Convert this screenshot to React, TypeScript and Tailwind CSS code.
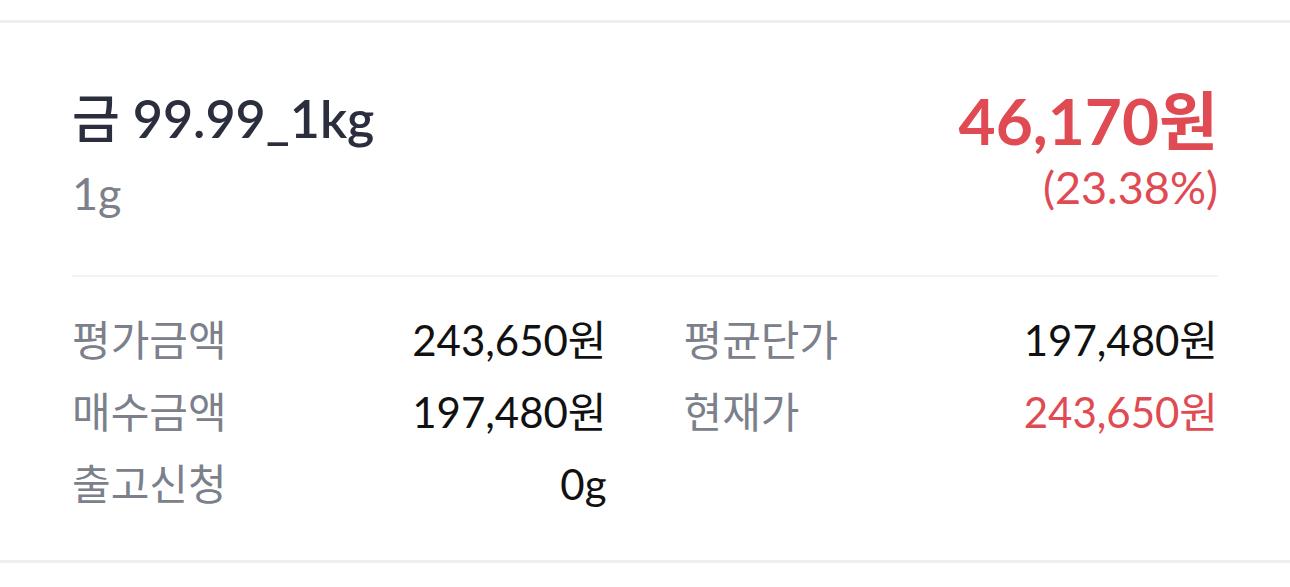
const FONT = "font-['Lato','Noto_Sans_CJK_KR',sans-serif]";

type Row = { label: string; value: string; red?: boolean };

const left: Row[] = [
  { label: '평가금액', value: '243,650원' },
  { label: '매수금액', value: '197,480원' },
  { label: '출고신청', value: '0g' },
];

const right: Row[] = [
  { label: '평균단가', value: '197,480원' },
  { label: '현재가', value: '243,650원', red: true },
];

function StatColumn({ rows }: { rows: Row[] }) {
  return (
    <div className="flex flex-col">
      {rows.map((r) => (
        <div key={r.label} className="flex items-center justify-between h-[72px]">
          <span className="text-[42px] text-[#7b808a]">{r.label}</span>
          <span className={`text-[42px] ${r.red ? 'text-[#e04a52]' : 'text-[#111111]'}`}>{r.value}</span>
        </div>
      ))}
    </div>
  );
}

export default function App() {
  return (
    <div className={`min-h-screen bg-white pt-5 ${FONT}`}>
      <div className="border-y-[3px] border-[#efefef] px-[72px]">
        <div className="flex justify-between pt-[64px] pb-[53px]">
          <div className="flex flex-col">
            <h1 className="text-[52px] leading-[62px] font-semibold text-[#2b2f3d]">
              <span className="font-medium">금</span> 99.99_1kg
            </h1>
            <p className="mt-[15px] text-[45px] leading-[58px] text-[#7b808a]">1g</p>
          </div>
          <div className="flex flex-col items-end text-[#e04a52]">
            <p className="text-[64px] leading-[68px] font-bold">46,170원</p>
            <p className="mt-[6px] text-[45px] leading-[52px]">(23.38%)</p>
          </div>
        </div>
        <div className="h-[2px] bg-[#f3f3f3]" />
        <div className="grid grid-cols-2 gap-x-[77px] pt-[27px] pb-[40px]">
          <StatColumn rows={left} />
          <StatColumn rows={right} />
        </div>
      </div>
    </div>
  );
}
